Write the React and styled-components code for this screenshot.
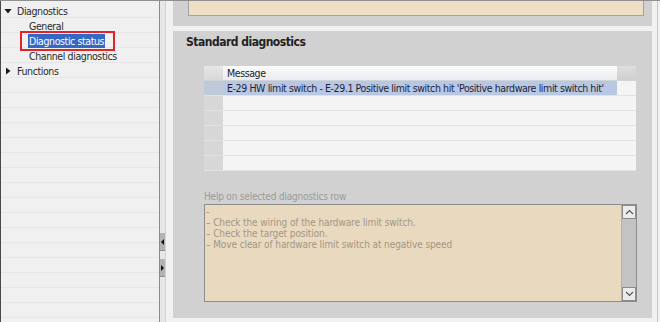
import React from 'react';
import styled, { createGlobalStyle } from 'styled-components';

const GlobalStyle = createGlobalStyle`
  html, body {
    margin: 0;
    padding: 0;
    background: #f1f1f1;
    overflow: hidden;
  }
  * { box-sizing: border-box; }
`;

const UI_FONT = `"Liberation Sans Narrow", "DejaVu Sans Condensed", "Liberation Sans", sans-serif`;

const tree = [
  { label: 'Diagnostics', level: 0, caret: 'down' },
  { label: 'General', level: 1 },
  { label: 'Diagnostic status', level: 1, selected: true },
  { label: 'Channel diagnostics', level: 1 },
  { label: 'Functions', level: 0, caret: 'right' },
];

const helpLines = [
  '-',
  '– Check the wiring of the hardware limit switch.',
  '– Check the target position.',
  '– Move clear of hardware limit switch at negative speed',
];

const message =
  "E-29 HW limit switch - E-29.1 Positive limit switch hit 'Positive hardware limit switch hit'";

const Caret = ({ dir }) => (
  <CaretBox>
    {dir === 'down' ? (
      <svg width="8" height="8" viewBox="0 0 8 8">
        <path d="M0.5 2 L7.5 2 L4 6.5 Z" fill="#1a1a1a" />
      </svg>
    ) : (
      <svg width="8" height="8" viewBox="0 0 8 8">
        <path d="M2 0.5 L6.5 4 L2 7.5 Z" fill="#1a1a1a" />
      </svg>
    )}
  </CaretBox>
);

const Chevron = ({ up }) => (
  <svg width="9" height="6" viewBox="0 0 9 6">
    <path
      d={up ? 'M1 5 L4.5 1.5 L8 5' : 'M1 1 L4.5 4.5 L8 1'}
      fill="none"
      stroke="#555"
      strokeWidth="1.2"
    />
  </svg>
);

export default function App() {
  return (
    <Screen>
      <GlobalStyle />
      <Sidebar>
        {tree.map((item) => (
          <TreeRow key={item.label} $level={item.level}>
            {item.caret ? <Caret dir={item.caret} /> : null}
            {item.selected ? (
              <SelectedLabel>{item.label}</SelectedLabel>
            ) : (
              <TreeLabel>{item.label}</TreeLabel>
            )}
          </TreeRow>
        ))}
      </Sidebar>

      <Splitter>
        <SplitButton>
          <svg width="3" height="6" viewBox="0 0 3 6">
            <path d="M3 0 L0 3 L3 6 Z" fill="#111" />
          </svg>
        </SplitButton>
        <SplitButton>
          <svg width="3" height="6" viewBox="0 0 3 6">
            <path d="M0 0 L3 3 L0 6 Z" fill="#111" />
          </svg>
        </SplitButton>
      </Splitter>

      <Main>
        <TopPanel>
          <BeigeStrip />
        </TopPanel>

        <Section>
          <SectionTitle>Standard diagnostics</SectionTitle>

          <Table>
            <HeadCell $corner />
            <HeadCell>Message</HeadCell>
            <HeadCell $end />
            {[0, 1, 2, 3, 4, 5].map((i) => (
              <React.Fragment key={i}>
                <RowHead $selected={i === 0} />
                <Cell $selected={i === 0}>{i === 0 ? message : ''}</Cell>
                <Cell />
              </React.Fragment>
            ))}
          </Table>

          <HelpLabel>Help on selected diagnostics row</HelpLabel>
          <HelpBox>
            <HelpText>
              {helpLines.map((line, i) => (
                <HelpLine key={i}>{line}</HelpLine>
              ))}
            </HelpText>
            <ScrollBar>
              <ScrollButton>
                <Chevron up />
              </ScrollButton>
              <ScrollTrack />
              <ScrollButton>
                <Chevron />
              </ScrollButton>
            </ScrollBar>
          </HelpBox>
        </Section>
      </Main>
    </Screen>
  );
}

const Screen = styled.div`
  display: flex;
  width: 660px;
  height: 322px;
  border-top: 1px solid #8f8f8f;
  background: #f1f1f1;
  font-family: ${UI_FONT};
  font-size: 10.5px;
  letter-spacing: -0.4px;
  color: #1e1e1e;
`;

const Sidebar = styled.div`
  width: 159px;
  flex-shrink: 0;
  padding-top: 2px;
  border-left: 1px solid #4a4a4a;
  background-color: #f0f0f0;
  background-image: repeating-linear-gradient(
    to bottom,
    transparent 0,
    transparent 14px,
    #e6e6e6 14px,
    #e6e6e6 15px
  );
  background-position: 0 2px;
`;

const TreeRow = styled.div`
  height: 15px;
  display: flex;
  align-items: center;
  padding-left: ${(p) => (p.$level === 0 ? 3 : 27)}px;
`;

const CaretBox = styled.span`
  width: 12px;
  display: flex;
  align-items: center;
`;

const TreeLabel = styled.span`
  line-height: 14px;
  padding: 0 1px;
  white-space: nowrap;
  color: #2a2a2a;
`;

const SelectedLabel = styled(TreeLabel)`
  position: relative;
  background: #3568c2;
  color: #fff;
  padding: 0 1px;

  &::after {
    content: '';
    position: absolute;
    top: -3px;
    bottom: -3px;
    left: -8px;
    right: -10px;
    border: 2px solid #e3232a;
  }
`;

const Splitter = styled.div`
  width: 7px;
  flex-shrink: 0;
  display: flex;
  flex-direction: column;
  gap: 8px;
  padding-top: 232px;
  border-left: 1px solid #8a8a8a;
  border-right: 1px solid #d2d2d2;
  background: #e7e7e7;
`;

const SplitButton = styled.div`
  height: 18px;
  width: 5px;
  display: flex;
  align-items: center;
  justify-content: center;
  background: #b3b3b3;
  border-bottom: 1px solid #8e8e8e;
`;

const Main = styled.div`
  flex: 1;
  display: flex;
  flex-direction: column;
  gap: 5px;
  padding: 0 5px 4px 7px;
  margin-right: 2px;
  border-right: 1px solid #c6c6c6;
`;

const TopPanel = styled.div`
  height: 25px;
  flex-shrink: 0;
  padding: 0 8px 0 15px;
  background: #d0d0d0;
`;

const BeigeStrip = styled.div`
  height: 15px;
  background: #efdfc6;
  border: 1px solid #a2a2a2;
  border-top: none;
`;

const Section = styled.div`
  flex: 1;
  background: #d1d1d1;
  padding: 3px 0 0 31px;
`;

const SectionTitle = styled.div`
  height: 16px;
  line-height: 16px;
  margin: 0 0 16px -18px;
  font-size: 12px;
  letter-spacing: -0.5px;
  font-weight: bold;
  color: #222;
`;

const Table = styled.div`
  width: 432px;
  display: grid;
  grid-template-columns: 19px 394px 19px;
  grid-template-rows: 15px repeat(6, 15px);
  background: #f4f4f4;
`;

const HeadCell = styled.div`
  display: flex;
  align-items: center;
  padding-left: ${(p) => (p.$corner || p.$end ? 0 : 4)}px;
  border-bottom: 1px solid #cfd4da;
  background: ${(p) =>
    p.$end
      ? 'linear-gradient(#dedede, #cfcfcf)'
      : p.$corner
      ? 'linear-gradient(#e6e6e6, #d8d8d8)'
      : 'linear-gradient(#fbfbfb, #e9ecef)'};
  color: #222;
`;

const RowHead = styled.div`
  background: ${(p) => (p.$selected ? '#bfcad8' : '#d7d7d7')};
  border-bottom: 1px solid #e3e3e3;
`;

const Cell = styled.div`
  display: flex;
  align-items: center;
  padding-left: 4px;
  white-space: nowrap;
  overflow: hidden;
  background: ${(p) => (p.$selected ? '#b8c7e2' : '#f4f4f4')};
  border-bottom: 1px solid #e2e2e2;
  color: #1f1f3a;
`;

const HelpLabel = styled.div`
  height: 13px;
  line-height: 13px;
  margin-top: 19px;
  font-size: 10px;
  letter-spacing: -0.2px;
  color: #9b9b9b;
`;

const HelpBox = styled.div`
  width: 433px;
  height: 98px;
  margin-top: 1px;
  display: flex;
  background: #e9d9bf;
  border: 1px solid #8d8d8d;
`;

const HelpText = styled.div`
  flex: 1;
  padding: 1px 0 0 1px;
  font-size: 10px;
  letter-spacing: -0.1px;
  color: #a39784;
`;

const HelpLine = styled.div`
  height: 11px;
  line-height: 11px;
  white-space: nowrap;
`;

const ScrollBar = styled.div`
  width: 15px;
  display: flex;
  flex-direction: column;
  background: #c3c3c3;
  border-left: 1px solid #b0b0b0;
`;

const ScrollButton = styled.div`
  height: 14px;
  display: flex;
  align-items: center;
  justify-content: center;
  background: #ececec;
  border: 1px solid #8a8a8a;
`;

const ScrollTrack = styled.div`
  flex: 1;
`;
